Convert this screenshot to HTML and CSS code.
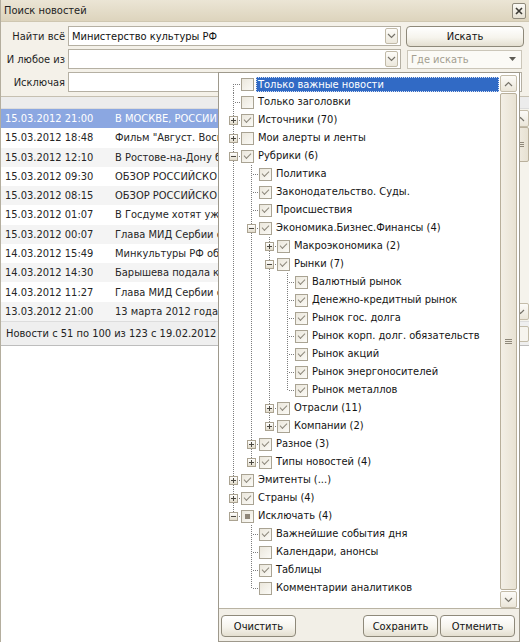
FILE: index.html
```html
<!DOCTYPE html>
<html lang="ru">
<head>
<meta charset="utf-8">
<title>Поиск новостей</title>
<link rel="stylesheet" href="styles.css">
</head>
<body>
<div class="window">
  <div class="titlebar">
    <span class="title">Поиск новостей</span>
    <span class="close"><svg width="8" height="8" viewBox="0 0 8 8"><path d="M1 1l6 6M7 1l-6 6" stroke="#3c3a34" stroke-width="1.6"/></svg></span>
  </div>

  <div class="form">
    <div class="frow">
      <span class="flabel">Найти всё</span>
      <div class="field f-main"><span class="ftext">Министерство культуры РФ</span><span class="ddbtn"><svg width="9" height="6" viewBox="0 0 9 6"><path d="M1 1l3.5 3.5L8 1" fill="none" stroke="#76736a" stroke-width="1.2"/></svg></span></div>
      <span class="btn btn-search">Искать</span>
    </div>
    <div class="frow">
      <span class="flabel">И любое из</span>
      <div class="field f-main"><span class="ftext"></span><span class="ddbtn"><svg width="9" height="6" viewBox="0 0 9 6"><path d="M1 1l3.5 3.5L8 1" fill="none" stroke="#76736a" stroke-width="1.2"/></svg></span></div>
      <div class="combo"><span class="combo-text">Где искать</span><svg width="7" height="4" viewBox="0 0 7 4"><path d="M0 0h7L3.5 4z" fill="#5d5b55"/></svg></div>
    </div>
    <div class="frow">
      <span class="flabel">Исключая</span>
      <div class="field f-wide"><span class="ftext"></span></div>
    </div>
  </div>

  <div class="band"></div>

  <div class="listwrap">
    <div class="list">
      <div class="lrow sel"><span class="ldate">15.03.2012 21:00</span><span class="ltext">В МОСКВЕ, РОССИИ</span></div>
      <div class="lrow"><span class="ldate">15.03.2012 18:48</span><span class="ltext">Фильм "Август. Вось</span></div>
      <div class="lrow alt"><span class="ldate">15.03.2012 12:10</span><span class="ltext">В Ростове-на-Дону б</span></div>
      <div class="lrow"><span class="ldate">15.03.2012 09:30</span><span class="ltext">ОБЗОР РОССИЙСКО</span></div>
      <div class="lrow alt"><span class="ldate">15.03.2012 08:15</span><span class="ltext">ОБЗОР РОССИЙСКО</span></div>
      <div class="lrow"><span class="ldate">15.03.2012 01:07</span><span class="ltext">В Госдуме хотят уж</span></div>
      <div class="lrow alt"><span class="ldate">15.03.2012 00:07</span><span class="ltext">Глава МИД Сербии с</span></div>
      <div class="lrow"><span class="ldate">14.03.2012 15:49</span><span class="ltext">Минкультуры РФ об</span></div>
      <div class="lrow alt"><span class="ldate">14.03.2012 14:30</span><span class="ltext">Барышева подала к</span></div>
      <div class="lrow"><span class="ldate">14.03.2012 11:27</span><span class="ltext">Глава МИД Сербии с</span></div>
      <div class="lrow alt"><span class="ldate">13.03.2012 21:00</span><span class="ltext">13 марта 2012 года,</span></div>
    </div>
    <div class="lscroll">
      <span class="sbtn"><svg width="9" height="6" viewBox="0 0 9 6"><path d="M1 5l3.5-3.5L8 5" fill="none" stroke="#76736a" stroke-width="1.2"/></svg></span>
      <span class="lthumb"><span class="grip"></span></span>
      <span class="ltrack"></span>
      <span class="sbtn"><svg width="9" height="6" viewBox="0 0 9 6"><path d="M1 1l3.5 3.5L8 1" fill="none" stroke="#76736a" stroke-width="1.2"/></svg></span>
    </div>
  </div>

  <div class="status"><span class="status-text">Новости с 51 по 100 из 123 с 19.02.2012 г</span><span class="status-end"></span></div>
  <div class="blank"></div>

  <div class="popup">
    <div class="tree-box">
      <div class="tree">
        <div class="trow"><span class="cn first"></span><span class="cb"></span><span class="lbl sel">Только важные новости</span></div>
        <div class="trow"><span class="cn t"></span><span class="cb"></span><span class="lbl">Только заголовки</span></div>
        <div class="trow"><span class="cn t"><b class="ex plus"></b></span><span class="cb on"></span><span class="lbl">Источники (70)</span></div>
        <div class="trow"><span class="cn t"><b class="ex plus"></b></span><span class="cb"></span><span class="lbl">Мои алерты и ленты</span></div>
        <div class="trow"><span class="cn t"><b class="ex"></b></span><span class="cb on"></span><span class="lbl">Рубрики (6)</span></div>
        <div class="trow"><i class="g"></i><span class="cn t"></span><span class="cb on"></span><span class="lbl">Политика</span></div>
        <div class="trow"><i class="g"></i><span class="cn t"></span><span class="cb on"></span><span class="lbl">Законодательство. Суды.</span></div>
        <div class="trow"><i class="g"></i><span class="cn t"></span><span class="cb on"></span><span class="lbl">Происшествия</span></div>
        <div class="trow"><i class="g"></i><span class="cn t"><b class="ex"></b></span><span class="cb on"></span><span class="lbl">Экономика.Бизнес.Финансы (4)</span></div>
        <div class="trow"><i class="g"></i><i class="g"></i><span class="cn t"><b class="ex plus"></b></span><span class="cb on"></span><span class="lbl">Макроэкономика (2)</span></div>
        <div class="trow"><i class="g"></i><i class="g"></i><span class="cn t"><b class="ex"></b></span><span class="cb on"></span><span class="lbl">Рынки (7)</span></div>
        <div class="trow"><i class="g"></i><i class="g"></i><i class="g"></i><span class="cn t"></span><span class="cb on"></span><span class="lbl">Валютный рынок</span></div>
        <div class="trow"><i class="g"></i><i class="g"></i><i class="g"></i><span class="cn t"></span><span class="cb on"></span><span class="lbl">Денежно-кредитный рынок</span></div>
        <div class="trow"><i class="g"></i><i class="g"></i><i class="g"></i><span class="cn t"></span><span class="cb on"></span><span class="lbl">Рынок гос. долга</span></div>
        <div class="trow"><i class="g"></i><i class="g"></i><i class="g"></i><span class="cn t"></span><span class="cb on"></span><span class="lbl">Рынок корп. долг. обязательств</span></div>
        <div class="trow"><i class="g"></i><i class="g"></i><i class="g"></i><span class="cn t"></span><span class="cb on"></span><span class="lbl">Рынок акций</span></div>
        <div class="trow"><i class="g"></i><i class="g"></i><i class="g"></i><span class="cn t"></span><span class="cb on"></span><span class="lbl">Рынок энергоносителей</span></div>
        <div class="trow"><i class="g"></i><i class="g"></i><i class="g"></i><span class="cn l"></span><span class="cb on"></span><span class="lbl">Рынок металлов</span></div>
        <div class="trow"><i class="g"></i><i class="g"></i><span class="cn t"><b class="ex plus"></b></span><span class="cb on"></span><span class="lbl">Отрасли (11)</span></div>
        <div class="trow"><i class="g"></i><i class="g"></i><span class="cn l"><b class="ex plus"></b></span><span class="cb on"></span><span class="lbl">Компании (2)</span></div>
        <div class="trow"><i class="g"></i><span class="cn t"><b class="ex plus"></b></span><span class="cb on"></span><span class="lbl">Разное (3)</span></div>
        <div class="trow"><i class="g"></i><span class="cn l"><b class="ex plus"></b></span><span class="cb on"></span><span class="lbl">Типы новостей (4)</span></div>
        <div class="trow"><span class="cn t"><b class="ex plus"></b></span><span class="cb on"></span><span class="lbl">Эмитенты (...)</span></div>
        <div class="trow"><span class="cn t"><b class="ex plus"></b></span><span class="cb on"></span><span class="lbl">Страны (4)</span></div>
        <div class="trow"><span class="cn l"><b class="ex"></b></span><span class="cb mix"></span><span class="lbl">Исключать (4)</span></div>
        <div class="trow"><i class="gb"></i><span class="cn t"></span><span class="cb on"></span><span class="lbl">Важнейшие события дня</span></div>
        <div class="trow"><i class="gb"></i><span class="cn t"></span><span class="cb"></span><span class="lbl">Календари, анонсы</span></div>
        <div class="trow"><i class="gb"></i><span class="cn t"></span><span class="cb on"></span><span class="lbl">Таблицы</span></div>
        <div class="trow"><i class="gb"></i><span class="cn l"></span><span class="cb"></span><span class="lbl">Комментарии аналитиков</span></div>
      </div>
      <div class="vscroll">
        <span class="sbtn"><svg width="9" height="6" viewBox="0 0 9 6"><path d="M1 5l3.5-3.5L8 5" fill="none" stroke="#76736a" stroke-width="1.2"/></svg></span>
        <span class="thumb"><span class="grip"></span></span>
        <span class="sbtn"><svg width="9" height="6" viewBox="0 0 9 6"><path d="M1 1l3.5 3.5L8 1" fill="none" stroke="#76736a" stroke-width="1.2"/></svg></span>
      </div>
    </div>
    <div class="pfooter">
      <span class="btn pbtn">Очистить</span>
      <span class="btn pbtn push">Сохранить</span>
      <span class="btn pbtn">Отменить</span>
    </div>
  </div>
</div>
</body>
</html>
```

FILE: styles.css
```css
html, body {
  margin: 0;
  padding: 0;
  background: #ffffff;
  overflow: hidden;
}

body {
  font-family: "DejaVu Sans Condensed", "DejaVu Sans", "Liberation Sans", sans-serif;
  font-size: 11px;
  color: #1b1b1b;
}

.window {
  position: relative;
  width: 529px;
  height: 642px;
  overflow: hidden;
  background: #ffffff;
  box-sizing: border-box;
  border-left: 1px solid #b4ae9e;
}

/* title bar */
.titlebar {
  height: 22px;
  display: flex;
  align-items: center;
  justify-content: space-between;
  padding: 0 3px 0 3px;
  box-sizing: border-box;
  background: linear-gradient(#ebe5d5, #ddd4bd);
  border-bottom: 1px solid #cfc7b1;
}

.title {
  line-height: 14px;
  color: #222;
}

.close {
  width: 14px;
  height: 16px;
  box-sizing: border-box;
  border: 1px solid #8f8a7b;
  border-radius: 2px;
  background: linear-gradient(#fbfaf6, #e6e1d3);
  display: flex;
  align-items: center;
  justify-content: center;
}

/* form */
.form {
  background: #f4f1e9;
  padding: 4px 0 4px 3px;
  display: flex;
  flex-direction: column;
  gap: 3px;
  border-bottom: 1px solid #c6c0b1;
}

.frow {
  display: flex;
  align-items: center;
  height: 20px;
}

.flabel {
  width: 61px;
  margin-right: 3px;
  text-align: right;
  white-space: nowrap;
  color: #1f1f1f;
}

.field {
  height: 20px;
  box-sizing: border-box;
  border: 1px solid #b5b0a3;
  background: #ffffff;
  display: flex;
  align-items: center;
  justify-content: space-between;
  padding: 0 2px 0 3px;
}

.f-main { width: 333px; }
.f-wide { width: 454px; }

.ftext {
  white-space: nowrap;
  color: #111;
}

.ddbtn {
  width: 13px;
  height: 16px;
  box-sizing: border-box;
  border: 1px solid #c1baa8;
  border-radius: 2px;
  background: linear-gradient(#fdfcf9, #ece8dc);
  display: flex;
  align-items: center;
  justify-content: center;
}

.btn {
  display: flex;
  align-items: center;
  justify-content: center;
  box-sizing: border-box;
  border: 1px solid #8e897a;
  border-radius: 4px;
  background: linear-gradient(#ffffff, #f6f4ed 55%, #e4dfd0);
  color: #111;
  white-space: nowrap;
}

.btn-search {
  width: 118px;
  height: 21px;
  margin-left: 5px;
}

.combo {
  width: 115px;
  height: 19px;
  margin-left: 6px;
  box-sizing: border-box;
  border: 1px solid #cbc6b9;
  background: #fbfaf6;
  display: flex;
  align-items: center;
  justify-content: space-between;
  padding: 0 5px 0 3px;
}

.combo-text {
  color: #a39e90;
}

.band {
  height: 11px;
  background: #ececec;
  border-bottom: 1px solid #dcdcdc;
}

/* list */
.listwrap {
  display: flex;
  height: 212px;
}

.list {
  flex: 1;
  display: flex;
  flex-direction: column;
  overflow: hidden;
}

.lrow {
  height: 19.3px;
  display: flex;
  align-items: center;
  white-space: nowrap;
  background: #ffffff;
  color: #262626;
}

.lrow.alt { background: #f4f4f4; }

.lrow.sel {
  background: #8ba7e1;
  color: #ffffff;
}

.ldate {
  width: 110px;
  padding-left: 4px;
  flex: none;
}

.ltext {
  flex: none;
}

.lscroll {
  width: 17px;
  display: flex;
  flex-direction: column;
  background: #f5f3ec;
  padding: 1px 0;
  box-sizing: border-box;
}

.lthumb {
  height: 35px;
  box-sizing: border-box;
  border: 1px solid #b9b09c;
  border-radius: 2px;
  background: linear-gradient(to right, #f4f0e7, #e7e1d2);
  display: flex;
  align-items: center;
  justify-content: center;
}

.ltrack { flex: 1; }

.status {
  height: 25px;
  box-sizing: border-box;
  background: #efefef;
  border-top: 1px solid #dddddd;
  border-bottom: 1px solid #bdbdbd;
  display: flex;
  align-items: center;
  justify-content: space-between;
  padding-left: 5px;
  white-space: nowrap;
  overflow: hidden;
}

.status-text {
  color: #222;
}

.status-end {
  width: 16px;
  height: 16px;
  flex: none;
  box-sizing: border-box;
  border: 1px solid #c3bca9;
  border-radius: 2px;
  background: #f6f4ee;
}

.blank {
  height: 300px;
  background: #ffffff;
}

/* popup with tree */
.popup {
  position: absolute;
  left: 217px;
  top: 72px;
  width: 302px;
  height: 570px;
  box-sizing: border-box;
  border: 1px solid #9e998c;
  background: #f2efe7;
  display: flex;
  flex-direction: column;
}

.tree-box {
  height: 536px;
  box-sizing: border-box;
  background: #ffffff;
  border-bottom: 1px solid #b9b3a3;
  padding: 2px 2px 0 3px;
  display: flex;
}

.tree {
  flex: 1;
  padding-left: 3px;
  display: flex;
  flex-direction: column;
  overflow: hidden;
}

.trow {
  height: 18px;
  display: flex;
  align-items: center;
  flex: none;
}

.g, .gb {
  width: 18px;
  height: 18px;
  flex: none;
}

.g {
  background-image: repeating-linear-gradient(to bottom, #7d7d7d 0 1px, transparent 1px 2px);
  background-position: 8px 0;
  background-size: 1px 18px;
  background-repeat: no-repeat;
}

.cn {
  width: 16px;
  height: 18px;
  flex: none;
  box-sizing: border-box;
  padding-left: 4px;
  display: flex;
  align-items: center;
  background-image:
    repeating-linear-gradient(to right, #7d7d7d 0 1px, transparent 1px 2px),
    repeating-linear-gradient(to bottom, #7d7d7d 0 1px, transparent 1px 2px);
  background-repeat: no-repeat;
  background-position: 10px 9px, 8px 0;
  background-size: 6px 1px, 1px 18px;
}

.cn.first {
  background-position: 10px 9px, 8px 9px;
  background-size: 6px 1px, 1px 9px;
}

.cn.l {
  background-size: 6px 1px, 1px 10px;
}

.ex {
  width: 9px;
  height: 9px;
  box-sizing: border-box;
  border: 1px solid #aba391;
  background: linear-gradient(#ffffff, #e2dccc);
  display: grid;
  place-items: center;
}

.ex::before {
  content: "";
  grid-area: 1 / 1;
  width: 5px;
  height: 1px;
  background: #4a4740;
}

.ex.plus::after {
  content: "";
  grid-area: 1 / 1;
  width: 1px;
  height: 5px;
  background: #4a4740;
}

.cb {
  width: 13px;
  height: 13px;
  flex: none;
  box-sizing: border-box;
  border: 1px solid #a9a393;
  background: linear-gradient(135deg, #ebe7dc, #fbfaf6);
  display: flex;
  align-items: center;
  justify-content: center;
}

.cb.on::after {
  content: "";
  width: 6px;
  height: 3px;
  border-left: 1.5px solid #8d887c;
  border-bottom: 1.5px solid #8d887c;
  transform: translate(0, -1px) rotate(-45deg);
}

.cb.mix::after {
  content: "";
  width: 5px;
  height: 5px;
  background: #8f8678;
}

.lbl {
  margin-left: 4px;
  line-height: 16px;
  white-space: nowrap;
  color: #141414;
}

.lbl.sel {
  flex: 1;
  margin-left: 2px;
  margin-right: 1px;
  padding-left: 2px;
  height: 15px;
  line-height: 15px;
  background: #316ac5;
  color: #ffffff;
  outline: 1px dotted #d9e2f3;
  outline-offset: -1px;
}

.vscroll {
  width: 17px;
  flex: none;
  display: flex;
  flex-direction: column;
}

.sbtn {
  width: 17px;
  height: 17px;
  flex: none;
  box-sizing: border-box;
  border: 1px solid #c4bca9;
  border-radius: 2px;
  background: linear-gradient(#fcfbf8, #ebe6d9);
  display: flex;
  align-items: center;
  justify-content: center;
}

.thumb {
  flex: 1;
  margin: 1px 0;
  box-sizing: border-box;
  border: 1px solid #b8af9b;
  border-radius: 2px;
  background: linear-gradient(to right, #f3efe6, #e8e2d3);
  display: flex;
  align-items: center;
  justify-content: center;
}

.grip {
  width: 7px;
  height: 5px;
  background: repeating-linear-gradient(to bottom, #8f887a 0 1px, transparent 1px 2px);
}

.pfooter {
  flex: 1;
  display: flex;
  align-items: flex-start;
  padding: 6px 4px 0 2px;
  gap: 2px;
}

.pbtn {
  width: 75px;
  height: 22px;
}

.pbtn.push {
  margin-left: auto;
}
```
